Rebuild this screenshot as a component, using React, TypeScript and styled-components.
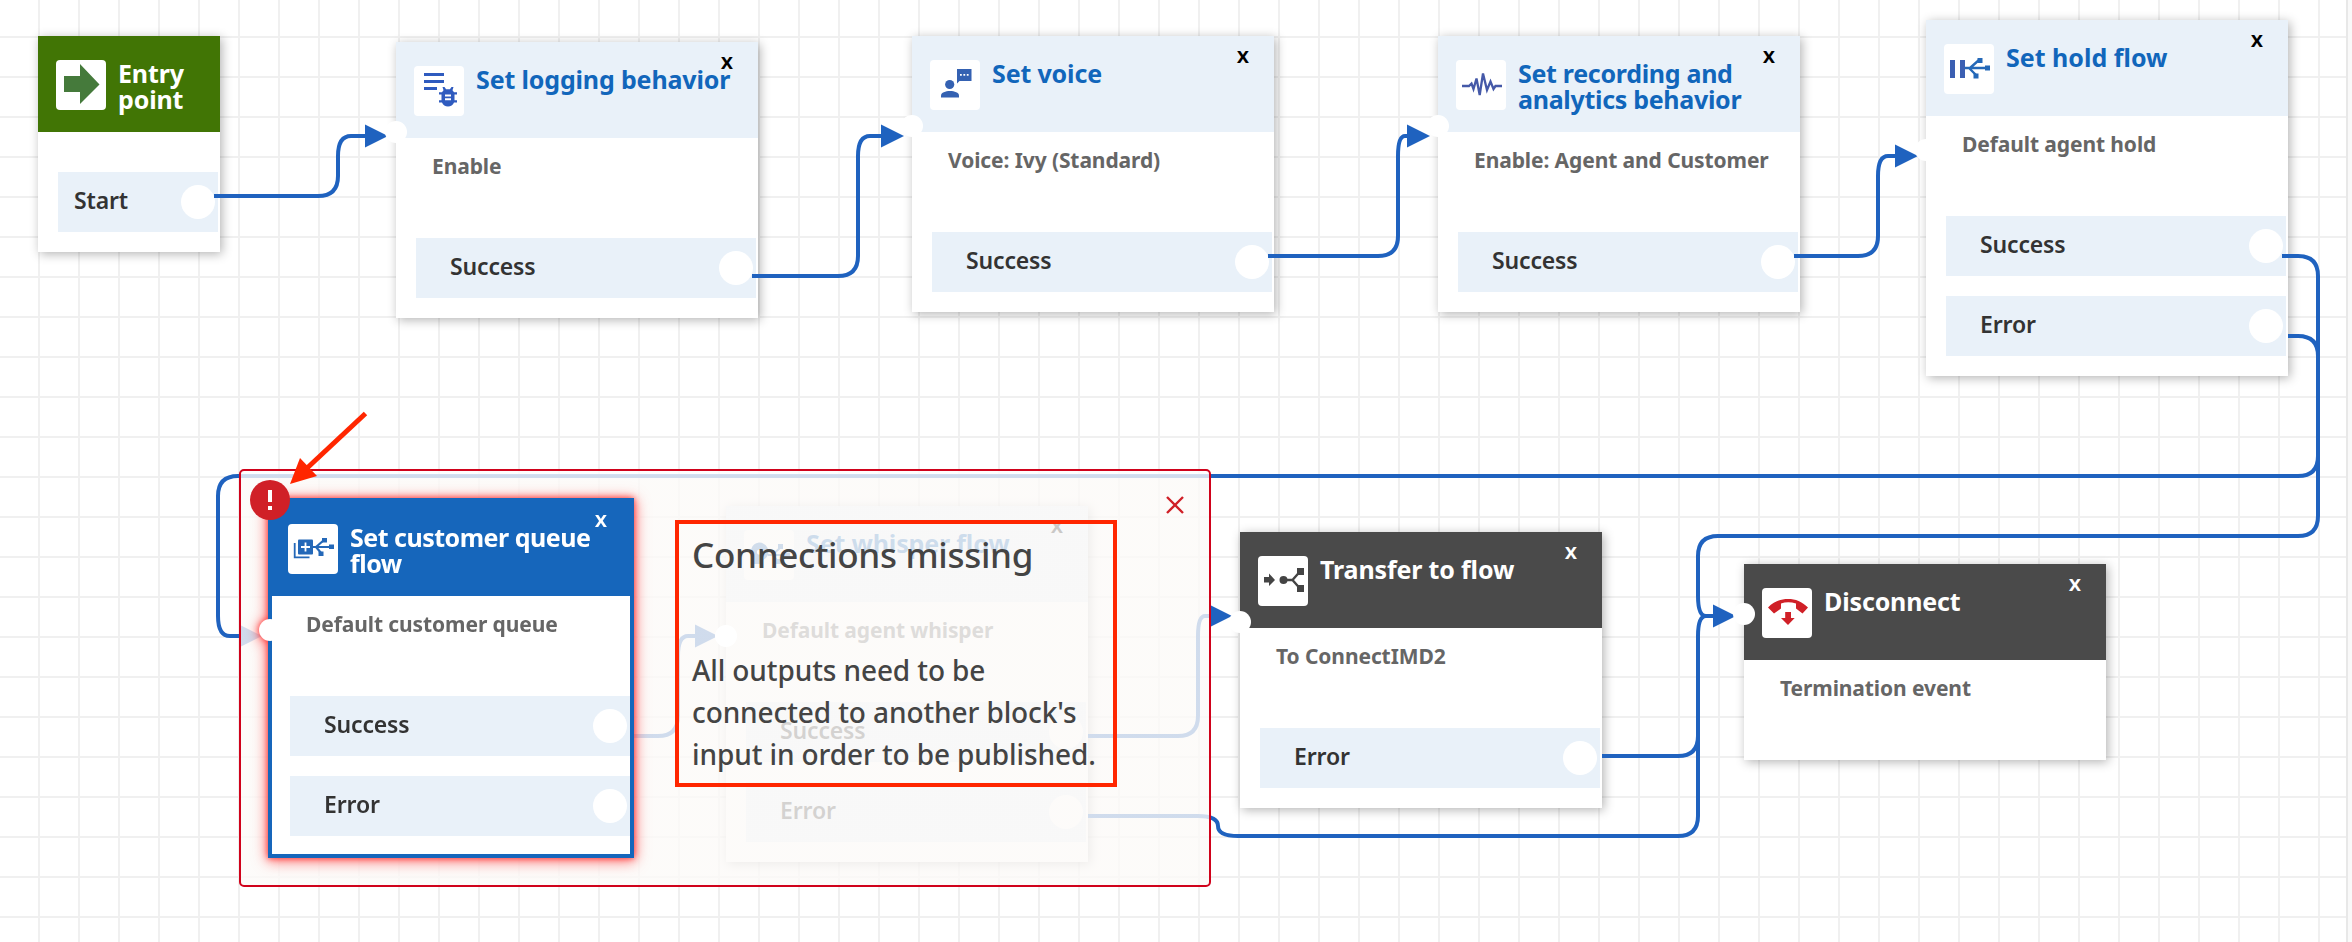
import React from "react";
import styled, { createGlobalStyle, css } from "styled-components";

const EDGE = "#1f62bf";

const GlobalStyle = createGlobalStyle`
  body { margin: 0; font-family: "Noto Sans", "Open Sans", sans-serif; background: #fff; }
`;

const Canvas = styled.main`
  position: relative;
  width: 2352px;
  height: 942px;
  overflow: hidden;
  background-color: #fff;
  background-image:
    linear-gradient(to right, #f0f0f0 2px, transparent 2px),
    linear-gradient(to bottom, #f0f0f0 2px, transparent 2px);
  background-size: 40px 40px;
  background-position: 38px 36px;
`;

const CanvasEdge = styled.div`
  position: absolute;
  top: 0;
  right: 0;
  width: 6px;
  height: 100%;
  box-sizing: border-box;
  border-left: 2px solid #e8e8e8;
  background: #f9f9f9;
`;

type Tone = "start" | "set" | "selected" | "end";

const tones: Record<Tone, { bg: string; title: string; close: string }> = {
  start: { bg: "#417505", title: "#fff", close: "#fff" },
  set: { bg: "#e9f1f9", title: "#1166bb", close: "#000" },
  selected: { bg: "#1666bb", title: "#fff", close: "#fff" },
  end: { bg: "#4a4a4a", title: "#fff", close: "#fff" },
};

const Block = styled.article<{ $x: number; $y: number; $h: number; $narrow?: boolean; $alert?: boolean }>`
  position: absolute;
  left: ${(p) => p.$x}px;
  top: ${(p) => p.$y}px;
  width: ${(p) => (p.$narrow ? 182 : 362)}px;
  height: ${(p) => p.$h}px;
  box-sizing: border-box;
  display: flex;
  flex-direction: column;
  background: #fff;
  box-shadow: 2px 2px 10px rgba(0, 0, 0, 0.3);
  ${(p) =>
    p.$alert &&
    css`
      outline: 4px solid #1666bb;
      outline-offset: -2px;
      box-shadow: none;
      filter: drop-shadow(0 0 3px #f33) drop-shadow(0 2px 7px rgba(255, 40, 40, 0.65));
    `}
`;

const Header = styled.header<{ $tone: Tone }>`
  position: relative;
  flex: none;
  display: flex;
  gap: 12px;
  height: 96px;
  box-sizing: border-box;
  padding: 24px 0 0 18px;
  background: ${(p) => tones[p.$tone].bg};
  color: ${(p) => tones[p.$tone].title};
`;

const IconTile = styled.div`
  flex: none;
  width: 50px;
  height: 50px;
  border-radius: 4px;
  background: #fff;
  svg { display: block; }
`;

const Title = styled.h2<{ $tracking: number }>`
  margin: 0;
  font-size: 25px;
  line-height: 26px;
  font-weight: 700;
  letter-spacing: ${(p) => p.$tracking}px;
  white-space: pre;
`;

const Close = styled.button<{ $tone: Tone }>`
  position: absolute;
  top: 5px;
  right: 20px;
  width: 22px;
  padding: 0;
  border: 0;
  background: none;
  font: 600 22px/26px "Noto Sans", sans-serif;
  color: ${(p) => tones[p.$tone].close};
`;

const Detail = styled.p`
  margin: 15px 0 0 36px;
  height: 26px;
  font-size: 21px;
  line-height: 26px;
  font-weight: 700;
  letter-spacing: -0.1px;
  color: #666;
  white-space: nowrap;
`;

const Outputs = styled.div`
  margin: auto 2px 20px 20px;
  display: flex;
  flex-direction: column;
  gap: 20px;
`;

const Output = styled.div<{ $indent: number }>`
  display: flex;
  align-items: center;
  justify-content: space-between;
  height: 60px;
  box-sizing: border-box;
  padding: 0 3px 0 ${(p) => p.$indent}px;
  background: #e9f1f9;
  font-size: 23px;
  font-weight: 600;
  letter-spacing: -0.15px;
  color: #333;
  span { padding-bottom: 4px; }
`;

const Socket = styled.i`
  width: 34px;
  height: 34px;
  border-radius: 50%;
  background: #fff;
`;

const InPort = styled.i<{ $y: number }>`
  position: absolute;
  left: -11px;
  top: ${(p) => p.$y - 11}px;
  width: 22px;
  height: 22px;
  border-radius: 50%;
  background: #fff;
  z-index: 1;
`;

const Wires = styled.svg`
  position: absolute;
  inset: 0;
  pointer-events: none;
`;

const Notice = styled.section`
  position: absolute;
  left: 239px;
  top: 469px;
  width: 972px;
  height: 418px;
  box-sizing: border-box;
  border: 2px solid #d0021b;
  border-radius: 5px;
  background: linear-gradient(rgba(255, 255, 255, 0.8) 4px, rgba(252, 250, 248, 0.8) 4px);
`;

const NoticeClose = styled.svg`
  position: absolute;
  right: 24px;
  top: 24px;
`;

const NoticeText = styled.div`
  position: absolute;
  left: 434px;
  top: 49px;
  width: 442px;
  height: 267px;
  box-sizing: border-box;
  padding: 13px 0 0 13px;
  border: 4px solid #ff2600;
  color: #444;
  white-space: pre;
  h1 { margin: 0; font-size: 35px; line-height: 36px; font-weight: 500; letter-spacing: -0.3px; }
  p { margin: 76px 0 0; font-size: 28px; line-height: 42px; font-weight: 500; letter-spacing: -0.1px; }
`;

const AlertBadge = styled.svg`
  position: absolute;
  left: 250px;
  top: 480px;
`;

const icons: Record<string, React.ReactNode> = {
  entry: <path d="M8 16H24V4L43.5 24.5 24 44V32H8Z" fill="#457a3b" />,
  logging: (
    <g fill="#2f5bbf">
      <path d="M10 7h20v3H10zM10 14h20v3H10zM10 21h13v3H10z" />
      <path
        fillRule="evenodd"
        d="M28.500 21h2l1.600 2.200h3.800l1.600-2.200h2l-1 3.200 1.500 2H43v2.400h-2.500v5.600H43v2.400h-3c-1 2.600-3.300 4-6 4s-5-1.400-6-4h-3v-2.400h2.500v-5.600H25v-2.400h3l1.500-2zM31 28.500v2h6v-2zm0 3.700v2h6v-2z"
      />
    </g>
  ),
  voice: (
    <g fill="#3461b2">
      <circle cx="19.700" cy="24.500" r="4.600" />
      <path d="M11 37.500v-2c0-3 4.500-4.500 9-4.500s9 1.500 9 4.500v2z" />
      <path fillRule="evenodd" d="M27 9h14.500v12H29.500L27 23.500zM30 14v1.800h1.800V14zm3.400 0v1.800h1.800V14zm3.400 0v1.800h1.800V14z" />
    </g>
  ),
  wave: (
    <path
      d="M6 26H13l2.500-2.500L17.500 29 20.500 18.500 23.700 35 27 13.500 31 30 34.500 21.500 37.500 29 39.500 26H46"
      fill="none"
      stroke="#4559a8"
      strokeWidth="2.300"
    />
  ),
  hold: (
    <>
      <path d="M6 16h5v18H6zM16 16h5v18h-5z" fill="#3b5fb2" />
      <path d="M21 24H42M26 24 35 16M25 24 32 31" fill="none" stroke="#2468b8" strokeWidth="2.400" />
      <path d="M41 21.500h5v5h-5zM33.500 14h5v5h-5zM29.500 29.500h5v5h-5z" fill="#2468b8" />
    </>
  ),
  queue: (
    <>
      <path d="M6.700 19v14.300H21.500" fill="none" stroke="#2468b8" strokeWidth="1.800" />
      <rect x="10" y="15.500" width="15" height="15" rx="1" fill="#2468b8" />
      <path d="M17.500 18.500v9M13 23h9" stroke="#fff" strokeWidth="1.800" />
      <path d="M25 23H42M28 23 36 16M28 23 33.500 29.500" fill="none" stroke="#2468b8" strokeWidth="2.200" />
      <path d="M41 20.500h5v4.500h-5zM34 14h5v4.500h-5zM30.500 27.500h5V32h-5z" fill="#2468b8" />
    </>
  ),
  whisper: (
    <>
      <path d="M15 12.500a9.500 9.500 0 0 1 9.500 9.500c0 6-5.500 7-8.500 12h-6v-5A9.500 9.500 0 0 1 15 12.500Z" fill="#2468b8" />
      <circle cx="15.500" cy="22" r="2.600" fill="#fff" />
      <path d="M24 25H42M28 25 36 18M28 25 34 31" fill="none" stroke="#2468b8" strokeWidth="2" />
      <path d="M34 14h5v5h-5zM32 29h5v5h-5zM41 22.500h5v5h-5z" fill="#2468b8" />
    </>
  ),
  transfer: (
    <>
      <path d="M6 21h5v-3.500L17 24l-6 6v-3.500H6z" fill="#444" />
      <circle cx="25.500" cy="24" r="4" fill="#444" />
      <path d="M25 24H34.500M42 15.500 34.500 24 42 32.500" fill="none" stroke="#444" strokeWidth="2.400" />
      <path d="M39 12h7v7h-7zM39 29h7v7h-7z" fill="#444" />
    </>
  ),
  hangup: (
    <g fill="#d02027">
      <path d="M6 19.500C12 13.500 18.500 11 26 11S40 13.500 46 19.500L40.500 25.500 34 20.500V15.500Q26 13 19 15.500V20.500L12 25.500Z" />
      <path d="M23.200 24h5.800v6h3.700L26 37 19 30h4.200z" />
    </g>
  ),
};

interface BlockData {
  x: number;
  y: number;
  h: number;
  tone: Tone;
  icon: string;
  title: string;
  tracking?: number;
  detail?: string;
  outputs: string[];
  port?: number;
}

const blocks: BlockData[] = [
  { x: 38, y: 36, h: 216, tone: "start", icon: "entry", title: "Entry\npoint", outputs: ["Start"] },
  { x: 396, y: 42, h: 276, tone: "set", icon: "logging", title: "Set logging behavior", detail: "Enable", outputs: ["Success"], port: 90 },
  { x: 912, y: 36, h: 276, tone: "set", icon: "voice", title: "Set voice", detail: "Voice: Ivy (Standard)", outputs: ["Success"], port: 90 },
  { x: 1438, y: 36, h: 276, tone: "set", icon: "wave", title: "Set recording and\nanalytics behavior", tracking: -0.3, detail: "Enable: Agent and Customer", outputs: ["Success"], port: 90 },
  { x: 1926, y: 20, h: 356, tone: "set", icon: "hold", title: "Set hold flow", tracking: 0, detail: "Default agent hold", outputs: ["Success", "Error"], port: 130 },
  { x: 726, y: 506, h: 356, tone: "set", icon: "whisper", title: "Set whisper flow", detail: "Default agent whisper", outputs: ["Success", "Error"], port: 130 },
  { x: 1240, y: 532, h: 276, tone: "end", icon: "transfer", title: "Transfer to flow", detail: "To ConnectIMD2", outputs: ["Error"], port: 90 },
  { x: 1744, y: 564, h: 196, tone: "end", icon: "hangup", title: "Disconnect", detail: "Termination event", outputs: [], port: 50 },
];

const queueBlock: BlockData = {
  x: 270, y: 500, h: 356, tone: "selected", icon: "queue", title: "Set customer queue\nflow", tracking: -0.5, detail: "Default customer queue", outputs: ["Success", "Error"], port: 130,
};

const wires = [
  "M214 196H318Q338 196 338 176V156Q338 136 351 136H366",
  "M752 276H838Q858 276 858 256V156Q858 136 870 136H882",
  "M1268 256H1378Q1398 256 1398 236V156Q1398 136 1405 136H1408",
  "M1794 256H1858Q1878 256 1878 236V176Q1878 156 1888 156H1896",
  "M2282 256H2298Q2318 256 2318 276V456Q2318 476 2298 476H238Q218 476 218 496V616Q218 636 230 636H240",
  "M2288 336H2298Q2318 336 2318 356V516Q2318 536 2298 536H1718Q1698 536 1698 556V596Q1698 616 1706 616H1714",
  "M1602 756H1678Q1698 756 1698 736V636Q1698 616 1706 616H1714",
  "M1088 816H1198Q1218 816 1218 826T1238 836H1678Q1698 836 1698 816V726",
  "M1088 736H1178Q1198 736 1198 716V636Q1198 616 1205 616H1210",
  "M634 736H658Q678 736 678 716V656Q678 636 688 636H696",
];

const arrowTips: [number, number][] = [
  [388, 136], [904, 136], [1430, 136], [1918, 156], [262, 636], [718, 636], [1232, 616], [1736, 616],
];

function FlowBlock({ data, alert }: { data: BlockData; alert?: boolean }) {
  const start = data.tone === "start";
  return (
    <Block $x={data.x} $y={data.y} $h={data.h} $narrow={start} $alert={alert}>
      {data.port !== undefined && <InPort $y={data.port} />}
      <Header $tone={data.tone}>
        <IconTile>
          <svg width="50" height="50" viewBox="0 0 50 50">{icons[data.icon]}</svg>
        </IconTile>
        <Title $tracking={data.tracking ?? -0.15}>{data.title}</Title>
        {!start && <Close $tone={data.tone}>x</Close>}
      </Header>
      {data.detail && <Detail>{data.detail}</Detail>}
      {data.outputs.length > 0 && (
        <Outputs>
          {data.outputs.map((o) => (
            <Output key={o} $indent={start ? 16 : 34}>
              <span>{o}</span>
              <Socket />
            </Output>
          ))}
        </Outputs>
      )}
    </Block>
  );
}

export default function App() {
  return (
    <>
      <GlobalStyle />
      <Canvas>
        <CanvasEdge />
        {blocks.map((b) => (
          <FlowBlock key={b.title} data={b} />
        ))}
        <Wires width="2352" height="942">
          {wires.map((d) => (
            <path key={d} d={d} fill="none" stroke={EDGE} strokeWidth="4" />
          ))}
          {arrowTips.map(([x, y]) => (
            <path key={`${x}-${y}`} d={`M${x} ${y}l-23 -11.500v23z`} fill={EDGE} />
          ))}
        </Wires>
        <Notice>
          <NoticeClose width="20" height="20" viewBox="0 0 20 20">
            <path d="M2 2 18 18M18 2 2 18" stroke="#d02027" strokeWidth="2.400" />
          </NoticeClose>
          <NoticeText>
            <h1>Connections missing</h1>
            <p>{"All outputs need to be\nconnected to another block's\ninput in order to be published."}</p>
          </NoticeText>
        </Notice>
        <FlowBlock data={queueBlock} alert />
        <AlertBadge width="40" height="40" viewBox="0 0 40 40">
          <circle cx="20" cy="20" r="20" fill="#d02027" />
          <path d="M18 10h4v12h-4zM18 26h4v4h-4z" fill="#fff" />
        </AlertBadge>
        <Wires width="2352" height="942">
          <path d="M365.500 413.500 305 470" stroke="#ff2600" strokeWidth="5" />
          <path d="M290 484 300 458 317 476Z" fill="#ff2600" />
        </Wires>
      </Canvas>
    </>
  );
}
